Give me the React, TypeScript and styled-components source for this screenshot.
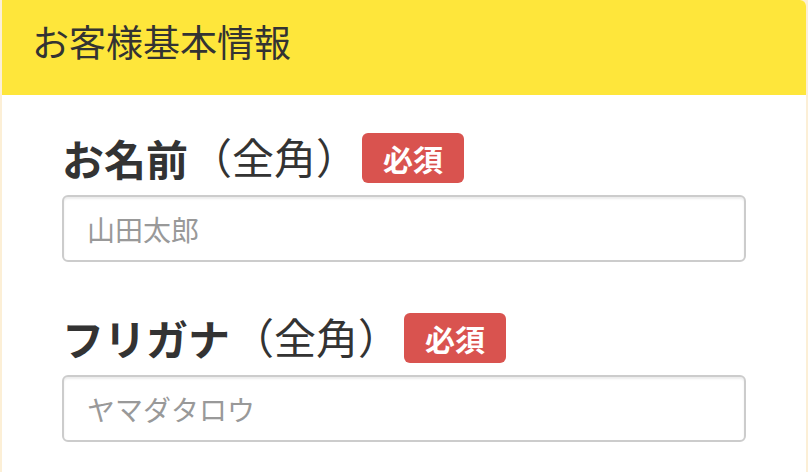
import React from "react";
import styled, { createGlobalStyle } from "styled-components";

const GlobalStyle = createGlobalStyle`
  html, body {
    margin: 0;
    padding: 0;
    background: #fcefd6;
  }
  body {
    font-family: "Noto Sans CJK JP", "Noto Sans", sans-serif;
    color: #333333;
  }
`;

const Page = styled.div`
  width: 808px;
  height: 472px;
  padding: 0 2px;
  box-sizing: border-box;
  overflow: hidden;
`;

const Card = styled.section`
  background: #ffffff;
  border-radius: 0 6px 0 0;
  overflow: hidden;
  height: 100%;
`;

const CardHeader = styled.h2`
  margin: 0;
  height: 95px;
  box-sizing: border-box;
  padding: 0 0 14px 30px;
  display: flex;
  align-items: center;
  background: #fee63b;
  font-size: 37px;
  font-weight: 400;
  color: #333333;
`;

const CardBody = styled.div`
  padding: 38px 60px 0 60px;
  display: flex;
  flex-direction: column;
  gap: 51px;
`;

const Field = styled.div`
  display: flex;
  flex-direction: column;
  gap: 12px;
`;

const LabelRow = styled.label`
  display: flex;
  align-items: center;
  height: 50px;
  font-size: 42px;
  line-height: 1;
`;

const LabelMain = styled.span`
  font-weight: 700;
`;

const LabelNote = styled.span`
  font-weight: 400;
  margin: 0 4px 0 2px;
  position: relative;
  top: -2px;
`;

const Required = styled.span`
  display: inline-flex;
  align-items: center;
  justify-content: center;
  height: 50px;
  padding: 0 21px;
  border-radius: 6px;
  background: #d9534f;
  color: #ffffff;
  font-size: 30px;
  font-weight: 700;
`;

const TextInput = styled.input`
  box-sizing: border-box;
  width: 684px;
  height: 67px;
  padding: 0 23px;
  border: 2px solid #cccccc;
  border-radius: 6px;
  box-shadow: inset 0 2px 2px rgba(0, 0, 0, 0.075);
  font-family: "Noto Sans CJK JP", "Noto Sans", sans-serif;
  font-size: 28px;
  color: #333333;
  outline: none;
  &::placeholder {
    color: #999999;
  }
`;

const fields = [
  { label: "お名前", placeholder: "山田太郎" },
  { label: "フリガナ", placeholder: "ヤマダタロウ" },
];

export default function App() {
  return (
    <>
      <GlobalStyle />
      <Page>
        <Card>
          <CardHeader>お客様基本情報</CardHeader>
          <CardBody>
            {fields.map((f) => (
              <Field key={f.label}>
                <LabelRow>
                  <LabelMain>{f.label}</LabelMain>
                  <LabelNote>（全角）</LabelNote>
                  <Required>必須</Required>
                </LabelRow>
                <TextInput type="text" placeholder={f.placeholder} />
              </Field>
            ))}
          </CardBody>
        </Card>
      </Page>
    </>
  );
}
